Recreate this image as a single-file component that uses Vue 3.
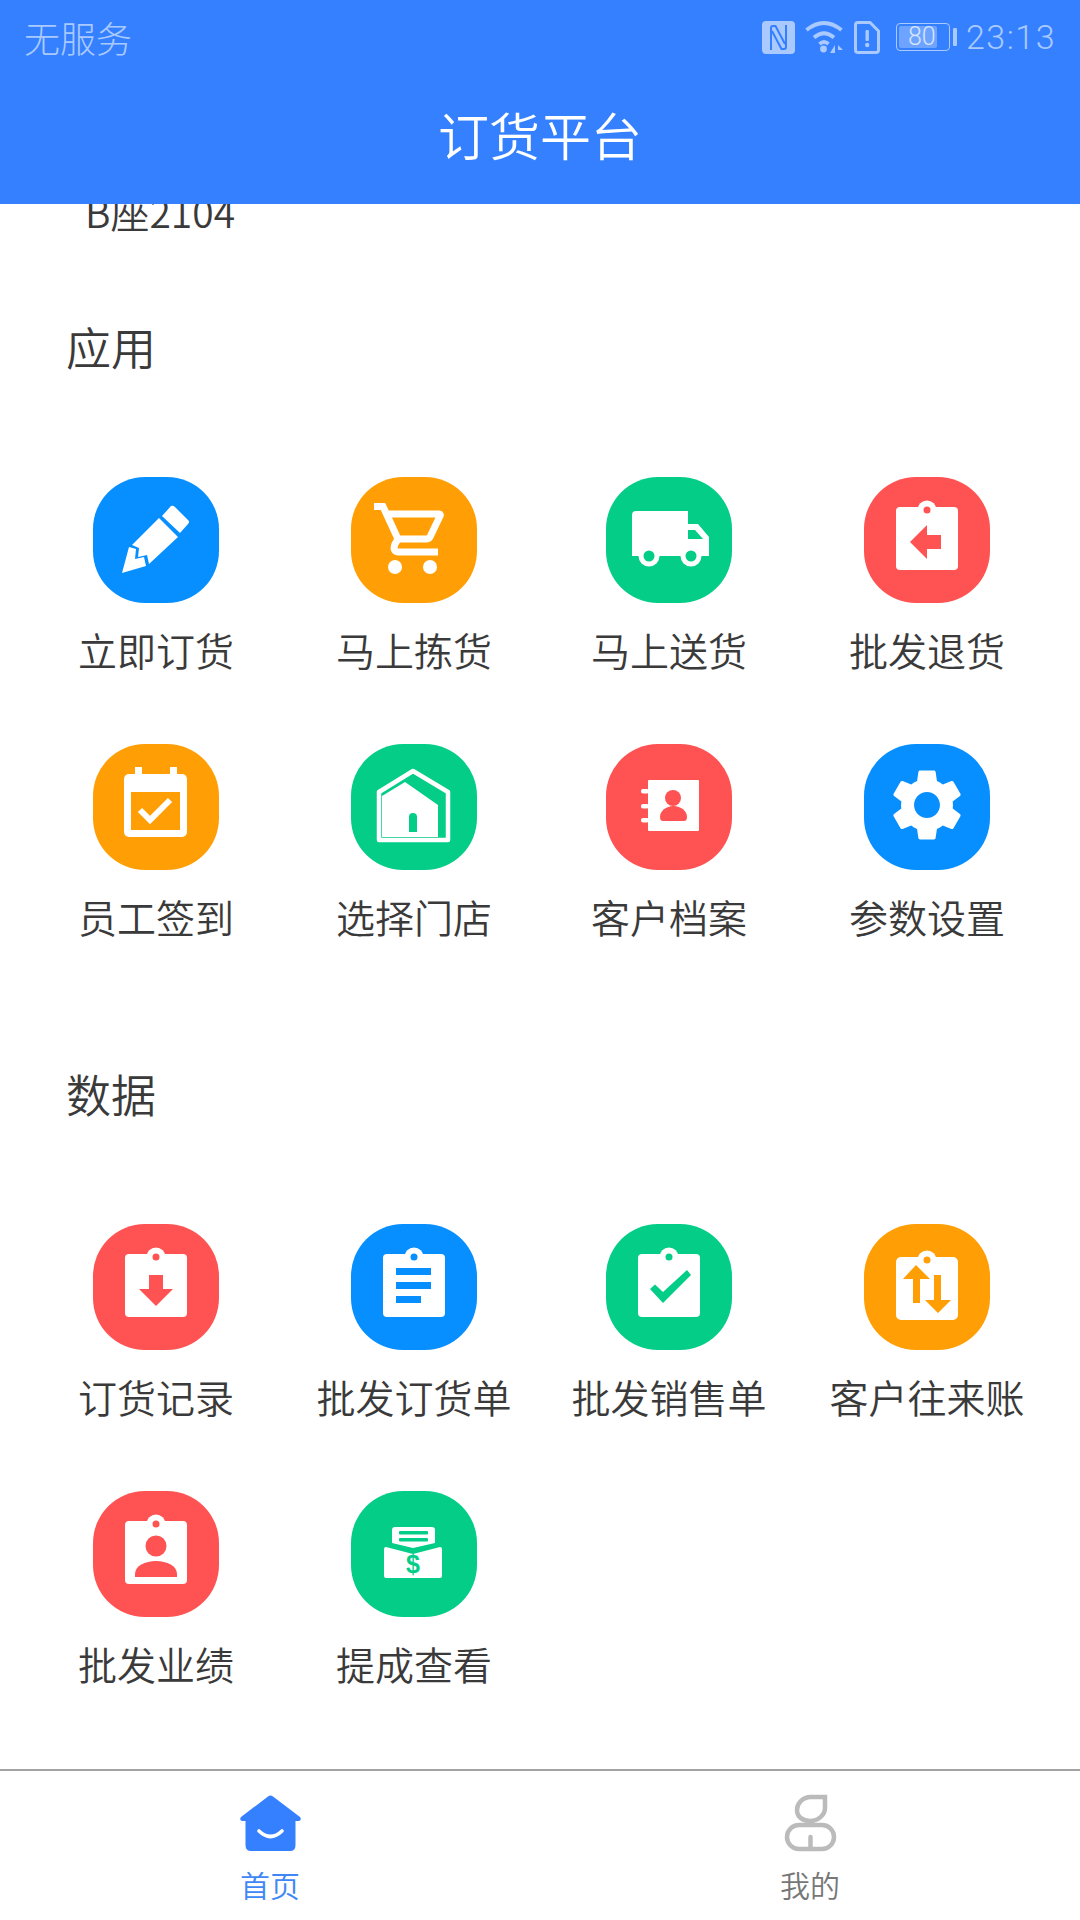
<template>
  <div class="page">
    <header class="header">
      <div class="status">
        <span class="carrier">无服务</span>
        <div class="status-right">
          <!-- NFC -->
          <svg class="st-nfc" width="33" height="33" viewBox="0 0 33 33">
            <rect width="33" height="33" rx="4" fill="#a9c9ff" />
            <path d="M9 29 V7 Q9 5 11 5 H13.5 L23 23" fill="none" stroke="#3580ff" stroke-width="2" />
            <path d="M24 4 V26 Q24 28 22 28 H19.5 L10 10" fill="none" stroke="#3580ff" stroke-width="2" />
          </svg>
          <svg class="st-wifi" width="39" height="32" viewBox="0 0 39 32" fill="none" stroke="#a9c9ff" stroke-width="3.8">
            <path d="M1.5 9 Q19 -5 36.5 9" />
            <path d="M9 16.5 Q19 8 29 16.5" />
            <path d="M14.5 23 Q19 19 23.5 23" />
            <circle cx="18.5" cy="28" r="3.4" fill="#a9c9ff" stroke="none" />
            <path d="M30 24 V32 L25 32 Z M33 24 L38 29 H33 Z" fill="#a9c9ff" stroke="none" />
          </svg>
          <svg class="st-sim" width="26" height="33" viewBox="0 0 26 33">
            <path d="M4 1.5 H16 L24.5 10 V29 Q24.5 31.5 22 31.5 H4 Q1.5 31.5 1.5 29 V4 Q1.5 1.5 4 1.5 Z" fill="none" stroke="#a9c9ff" stroke-width="3" />
            <rect x="11.5" y="9" width="3.4" height="11" rx="1" fill="#a9c9ff" />
            <circle cx="13.2" cy="24" r="2.2" fill="#a9c9ff" />
          </svg>
          <div class="battery">
            <div class="battery-body">
              <div class="battery-fill"></div>
              <span class="battery-num">80</span>
            </div>
            <div class="battery-tip"></div>
          </div>
          <span class="clock">23:13</span>
        </div>
      </div>
      <div class="title">订货平台</div>
    </header>

    <main class="content">
      <div class="address">B座2104</div>

      <h2 class="section-title first">应用</h2>
      <div class="grid grid-first">
        <div class="item">
          <svg class="tile blue" viewBox="0 0 126 126">
            <path class="bg" :d="tile" />
            <path d="M78 29 Q80 28 82 30 L95 43 Q97 45 95 47 L87 56 L69 39 Z" />
            <path d="M66 41 L85 60 L56 87 L54 78 L45 80 L46 71 L39 68 Z" />
            <path d="M36 70 L43 72 L42 82 L51 80 L53 89 L29 96 Z" />
          </svg>
          <span class="label">立即订货</span>
        </div>
        <div class="item">
          <svg class="tile orange" viewBox="0 0 126 126">
            <path class="bg" :d="tile" />
            <path class="line" d="M23 29.5 H32 L47 62 H75 Q78 62 79 60 L89 39 Q90 37 88 37 H36" stroke-width="7" />
            <path class="line" d="M47 62 L44 67 Q41 75 48 75 H87" stroke-width="7" />
            <circle cx="44" cy="90" r="7" />
            <circle cx="79" cy="90" r="7" />
          </svg>
          <span class="label">马上拣货</span>
        </div>
        <div class="item">
          <svg class="tile green" viewBox="0 0 126 126">
            <path class="bg" :d="tile" />
            <path d="M30 34 H82 V47 H92 L103 60 V79 H26 V38 Q26 34 30 34 Z" />
            <path class="cut" d="M82 53 H89 L97 62 H82 Z" />
            <circle cx="43" cy="79" r="10.5" />
            <circle class="cut" cx="43" cy="79" r="5.5" />
            <circle cx="85" cy="79" r="10.5" />
            <circle class="cut" cx="85" cy="79" r="5.5" />
          </svg>
          <span class="label">马上送货</span>
        </div>
        <div class="item">
          <svg class="tile red" viewBox="0 0 126 126">
            <path class="bg" :d="tile" />
            <path :d="board" />
            <circle cx="63" cy="33" r="9.5" />
            <circle class="cut" cx="63" cy="33" r="3.5" />
            <path class="cut" d="M46 65 L63 48 V58 H77 V72 H63 V82 Z" />
          </svg>
          <span class="label">批发退货</span>
        </div>
        <div class="item">
          <svg class="tile orange" viewBox="0 0 126 126">
            <path class="bg" :d="tile" />
            <rect x="31" y="30" width="63" height="63" rx="5" />
            <rect x="42" y="23" width="7" height="8" />
            <rect x="77" y="23" width="7" height="8" />
            <rect class="cut" x="38" y="48" width="49" height="38" />
            <path class="line" d="M47 66 L57 76 L77 56" stroke-width="6" />
          </svg>
          <span class="label">员工签到</span>
        </div>
        <div class="item">
          <svg class="tile green" viewBox="0 0 126 126">
            <path class="bg" :d="tile" />
            <path class="line" d="M62 27 L28 48 V96 H97 V48 Z" stroke-width="4.5" stroke-linejoin="round" />
            <path d="M54 38 L31 52 V93 H87 V61 Z" />
            <path class="cut" d="M58 88 V73 Q58 69 62 69 Q66 69 66 73 V88 Z" />
          </svg>
          <span class="label">选择门店</span>
        </div>
        <div class="item">
          <svg class="tile red" viewBox="0 0 126 126">
            <path class="bg" :d="tile" />
            <rect x="42" y="36" width="51" height="51" rx="1" />
            <rect x="35" y="45" width="8" height="4.5" rx="2" />
            <rect x="35" y="60" width="8" height="4.5" rx="2" />
            <rect x="35" y="74" width="8" height="4.5" rx="2" />
            <circle class="cut" cx="67" cy="54" r="8" />
            <path class="cut" d="M54 73 C54 67 60 62 67.5 62 C75 62 81 67 81 73 Q81 77 78 77 H57 Q54 77 54 73 Z" />
          </svg>
          <span class="label">客户档案</span>
        </div>
        <div class="item">
          <svg class="tile blue" viewBox="0 0 126 126">
            <path class="bg" :d="tile" />
            <path transform="translate(19.8 17.8) scale(3.6)" d="M19.14 12.94c.04-.3.06-.61.06-.94 0-.32-.02-.64-.07-.94l2.03-1.58c.18-.14.23-.41.12-.61l-1.92-3.32c-.12-.22-.37-.29-.59-.22l-2.39.96c-.5-.38-1.03-.7-1.62-.94l-.36-2.54c-.04-.24-.24-.41-.48-.41h-3.84c-.24 0-.43.17-.47.41l-.36 2.54c-.59.24-1.13.57-1.62.94l-2.39-.96c-.22-.08-.47 0-.59.22L2.74 8.87c-.12.21-.08.47.12.61l2.03 1.58c-.05.3-.09.63-.09.94s.02.64.07.94l-2.03 1.58c-.18.14-.23.41-.12.61l1.92 3.32c.12.22.37.29.59.22l2.39-.96c.5.38 1.03.7 1.62.94l.36 2.54c.05.24.24.41.48.41h3.84c.24 0 .44-.17.47-.41l.36-2.54c.59-.24 1.13-.56 1.62-.94l2.39.96c.22.08.47 0 .59-.22l1.92-3.32c.12-.22.07-.47-.12-.61l-2.01-1.58zM12 15.6c-1.98 0-3.6-1.62-3.6-3.6s1.62-3.6 3.6-3.6 3.6 1.62 3.6 3.6-1.62 3.6-3.6 3.6z" />
          </svg>
          <span class="label">参数设置</span>
        </div>
      </div>

      <h2 class="section-title second">数据</h2>
      <div class="grid grid-second">
        <div class="item">
          <svg class="tile red" viewBox="0 0 126 126">
            <path class="bg" :d="tile" />
            <path :d="board" />
            <circle cx="63" cy="33" r="9.5" />
            <circle class="cut" cx="63" cy="33" r="3.5" />
            <path class="cut" d="M56 51 H70 V65 H80 L63 82 L46 65 H56 Z" />
          </svg>
          <span class="label">订货记录</span>
        </div>
        <div class="item">
          <svg class="tile blue" viewBox="0 0 126 126">
            <path class="bg" :d="tile" />
            <path :d="board" />
            <circle cx="63" cy="33" r="9.5" />
            <circle class="cut" cx="63" cy="33" r="3.5" />
            <rect class="cut" x="45" y="44" width="35" height="7" />
            <rect class="cut" x="45" y="58" width="35" height="7" />
            <rect class="cut" x="45" y="72" width="25" height="7" />
          </svg>
          <span class="label">批发订货单</span>
        </div>
        <div class="item">
          <svg class="tile green" viewBox="0 0 126 126">
            <path class="bg" :d="tile" />
            <path :d="board" />
            <circle cx="63" cy="33" r="9.5" />
            <circle class="cut" cx="63" cy="33" r="3.5" />
            <path class="cut" d="M44 65 L49 60.5 L57 68 L81 46 L85 51 L57 79 Z" />
          </svg>
          <span class="label">批发销售单</span>
        </div>
        <div class="item">
          <svg class="tile orange" viewBox="0 0 126 126">
            <path class="bg" :d="tile" />
            <rect x="32" y="33" width="62" height="63" rx="5" />
            <circle cx="63" cy="36" r="9.5" />
            <circle class="cut" cx="63" cy="36" r="3.5" />
            <path class="cut" d="M52 41 L66 55 H56 V79 H49 V55 H39 Z" />
            <path class="cut" d="M70 51 H77 V76 H87 L74 89 L61 76 H70 Z" />
          </svg>
          <span class="label">客户往来账</span>
        </div>
        <div class="item">
          <svg class="tile red" viewBox="0 0 126 126">
            <path class="bg" :d="tile" />
            <path :d="board" />
            <circle cx="63" cy="33" r="9.5" />
            <circle class="cut" cx="63" cy="33" r="3.5" />
            <circle class="cut" cx="63" cy="55" r="10.5" />
            <path class="cut" d="M42 86 V83 C42 75 52 70 63 70 C74 70 84 75 84 83 V86 Z" />
          </svg>
          <span class="label">批发业绩</span>
        </div>
        <div class="item">
          <svg class="tile green" viewBox="0 0 126 126">
            <path class="bg" :d="tile" />
            <path d="M44 36 H81 Q84 36 84 39 V52 L62 57 L41 52 V39 Q41 36 44 36 Z" />
            <rect class="cut" x="48" y="40" width="29" height="3.6" rx="1" />
            <rect class="cut" x="48" y="47" width="29" height="3.6" rx="1" />
            <path d="M35 56 L62 63 L89 56 Q91 56 91 58 V85 Q91 87 89 87 H35 Q33 87 33 85 V58 Q33 56 35 56 Z" />
            <text class="cut money" x="62" y="82" text-anchor="middle">$</text>
          </svg>
          <span class="label">提成查看</span>
        </div>
      </div>
    </main>

    <nav class="tabbar">
      <div class="tab active">
        <svg class="tab-icon" width="61" height="56" viewBox="0 0 61 56">
          <path d="M28 1.5 Q30.5 -0.5 33 1.5 L60 22 Q62 25 59 26 L55.5 26 V50 Q55.5 56 50 56 H11 Q5.5 56 5.5 50 V26 L2 26 Q-1 25 1 22 Z" fill="#3580ff" />
          <path d="M19 36 Q30.5 47 42 36" fill="none" stroke="#fff" stroke-width="3.6" stroke-linecap="round" />
        </svg>
        <span>首页</span>
      </div>
      <div class="tab">
        <svg class="tab-icon" width="51" height="56" viewBox="0 0 51 56" fill="none" stroke="#bbb" stroke-width="4.5">
          <path d="M40 2 H26 C17 2 12 9 12 15 C12 22 18 26 25 26 C33 26 40 20 40 13 Z" />
          <rect x="2" y="30" width="47" height="24" rx="12" />
          <path d="M25.5 42 V54" stroke-linecap="round" />
        </svg>
        <span>我的</span>
      </div>
    </nav>
  </div>
</template>

<script setup>
// 圆角方块背景 和 夹板形状，图标里反复用到
const tile = 'M52 0 H74 A52 52 0 0 1 126 52 V74 A52 52 0 0 1 74 126 H52 A52 52 0 0 1 0 74 V52 A52 52 0 0 1 52 0 Z'
const board = 'M36 30 H90 Q94 30 94 34 V89 Q94 93 90 93 H36 Q32 93 32 89 V34 Q32 30 36 30 Z'
</script>

<style>
html,
body {
  margin: 0;
  background: #fff;
}
</style>

<style scoped>
.page {
  width: 1080px;
  height: 1920px;
  display: flex;
  flex-direction: column;
  overflow: hidden;
  background: #fff;
  font-family: "Noto Sans CJK SC", "Noto Sans", sans-serif;
  font-weight: 350;
  color: #3a3a3a;
}

.header {
  height: 204px;
  flex: none;
  background: #3580ff;
  position: relative;
  z-index: 1;
}

.status {
  height: 74px;
  display: flex;
  align-items: center;
  justify-content: space-between;
  padding: 0 24px;
  color: #a9c9ff;
}

.carrier {
  font-size: 36px;
  font-weight: 300;
}

.status-right {
  display: flex;
  align-items: center;
}

.st-nfc { margin-right: 10px; }
.st-wifi { margin-right: 10px; }
.st-sim { margin-right: 16px; }

.battery {
  display: flex;
  align-items: center;
  margin-right: 9px;
}

.battery-body {
  position: relative;
  width: 54px;
  height: 28px;
  box-sizing: border-box;
  border: 1.5px solid #a9c9ff;
  border-radius: 4px;
}

.battery-fill {
  position: absolute;
  left: 2px;
  top: 2px;
  bottom: 2px;
  width: 38px;
  background: #6ea4ff;
  border-radius: 2px;
}

.battery-num {
  position: absolute;
  left: 11px;
  top: 0;
  line-height: 25px;
  font-size: 25px;
  font-family: Roboto, sans-serif;
  font-weight: 300;
  color: #d5e4ff;
}

.battery-tip {
  width: 4px;
  height: 18px;
  margin-left: 3px;
  background: #a9c9ff;
  border-radius: 1px;
}

.clock {
  font-family: Roboto, sans-serif;
  font-size: 34px;
  font-weight: 300;
  letter-spacing: 1.5px;
}

.title {
  height: 120px;
  line-height: 120px;
  text-align: center;
  color: #fff;
  font-size: 51px;
}

.content {
  flex: 1;
  min-height: 0;
  overflow: hidden;
}

.address {
  margin-top: -21px;
  padding-left: 85px;
  font-size: 39px;
  line-height: 56px;
}

.section-title {
  margin: 0;
  padding-left: 66px;
  font-size: 45px;
  font-weight: 350;
  line-height: 60px;
}

.section-title.first { margin-top: 78px; }
.section-title.second { margin-top: 120px; }

.grid {
  display: grid;
  grid-template-columns: 258px 258px 252px 264px;
  row-gap: 67px;
  margin-left: 27px;
}

.grid-first { margin-top: 100px; }
.grid-second { margin-top: 100px; }

.item {
  display: flex;
  flex-direction: column;
  align-items: center;
}

.tile {
  display: block;
  width: 126px;
  height: 126px;
  fill: #fff;
}

.blue { color: #078fff; }
.orange { color: #ff9f05; }
.green { color: #04cd88; }
.red { color: #ff5252; }

.bg,
.cut {
  fill: currentColor;
}

.line {
  fill: none;
  stroke: #fff;
}

.money {
  font-family: "Liberation Sans", sans-serif;
  font-size: 25px;
  font-weight: 700;
}

.label {
  margin-top: 18px;
  font-size: 39px;
  line-height: 56px;
  white-space: nowrap;
}

.tabbar {
  height: 151px;
  flex: none;
  box-sizing: border-box;
  border-top: 2px solid #a3a3a3;
  display: grid;
  grid-template-columns: 1fr 1fr;
  background: #fff;
}

.tab {
  display: flex;
  flex-direction: column;
  align-items: center;
  padding-top: 24px;
  font-size: 30px;
  line-height: 40px;
  color: #777;
}

.tab.active {
  color: #3f87f5;
}

.tab-icon {
  display: block;
  margin-bottom: 13px;
  overflow: visible;
}
</style>
